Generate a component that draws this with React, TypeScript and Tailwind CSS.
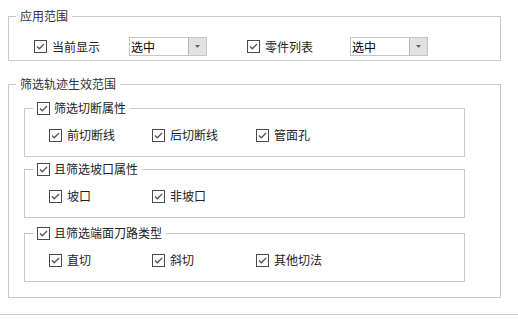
import React from 'react';

const font = { fontFamily: '"Noto Sans CJK SC", "Noto Sans", sans-serif' };

function Check() {
  return (
    <svg width="13" height="13" viewBox="0 0 13 13" className="shrink-0">
      <rect x="0.5" y="0.5" width="12" height="12" fill="#fff" stroke="#4a4a4a" />
      <polyline points="3,6.5 5.3,8.8 10,4" fill="none" stroke="#555" strokeWidth="1.3" />
    </svg>
  );
}

function CheckItem({ label, className = '' }: { label: string; className?: string }) {
  return (
    <label className={`flex items-center gap-[5px] h-4 ${className}`}>
      <Check />
      <span>{label}</span>
    </label>
  );
}

function Combo({ value }: { value: string }) {
  return (
    <div className="flex w-[78px] h-[19px] border border-[#c6c6c6] bg-white">
      <div className="flex-1 pl-[1px] leading-[17px] text-black">{value}</div>
      <div className="w-[18px] flex items-center justify-center bg-[#e2e2e2] border-l border-[#b5b5b5]">
        <svg width="5" height="3" viewBox="0 0 5 3">
          <polygon points="0,0 5,0 2.5,3" fill="#666" />
        </svg>
      </div>
    </div>
  );
}

function SubGroup({
  title,
  items,
  className = '',
}: {
  title: string;
  items: string[];
  className?: string;
}) {
  return (
    <fieldset className={`ml-[15px] w-[441px] border border-[#c9c9c9] pt-[11px] pb-[13px] ${className}`}>
      <legend className="ml-[8px] px-[4px] leading-4">
        <div className="flex items-center gap-[4px]">
          <Check />
          <span>{title}</span>
        </div>
      </legend>
      <div className="grid grid-cols-[103px_104px_auto] pl-[24px]">
        {items.map((it) => (
          <CheckItem key={it} label={it} />
        ))}
      </div>
    </fieldset>
  );
}

export default function App() {
  return (
    <div className="w-[518px] h-[332px] bg-white text-[12px] text-[#222] overflow-hidden pt-[8px]" style={font}>
      {/* 应用范围 */}
      <fieldset className="ml-[8px] w-[493px] border border-[#c9c9c9] pt-[13px] pb-[4px]">
        <legend className="ml-[7px] px-[4px] leading-4 text-[#333]">应用范围</legend>
        <div className="flex items-center h-[19px] pl-[25px]">
          <CheckItem label="当前显示" className="w-[95px]" />
          <Combo value="选中" />
          <CheckItem label="零件列表" className="ml-[40px] w-[103px]" />
          <Combo value="选中" />
        </div>
      </fieldset>

      {/* 筛选轨迹生效范围 */}
      <fieldset className="mt-[15px] ml-[8px] w-[493px] border border-[#c9c9c9] pt-[8px] pb-[15px]">
        <legend className="ml-[7px] px-[4px] leading-4 text-[#333]">筛选轨迹生效范围</legend>
        <SubGroup title="筛选切断属性" items={['前切断线', '后切断线', '管面孔']} />
        <SubGroup title="且筛选坡口属性" items={['坡口', '非坡口']} className="mt-[4px]" />
        <SubGroup title="且筛选端面刀路类型" items={['直切', '斜切', '其他切法']} className="mt-[7px]" />
      </fieldset>

      <div className="mt-[16px] h-px bg-[#cdcdcd]" />
    </div>
  );
}
